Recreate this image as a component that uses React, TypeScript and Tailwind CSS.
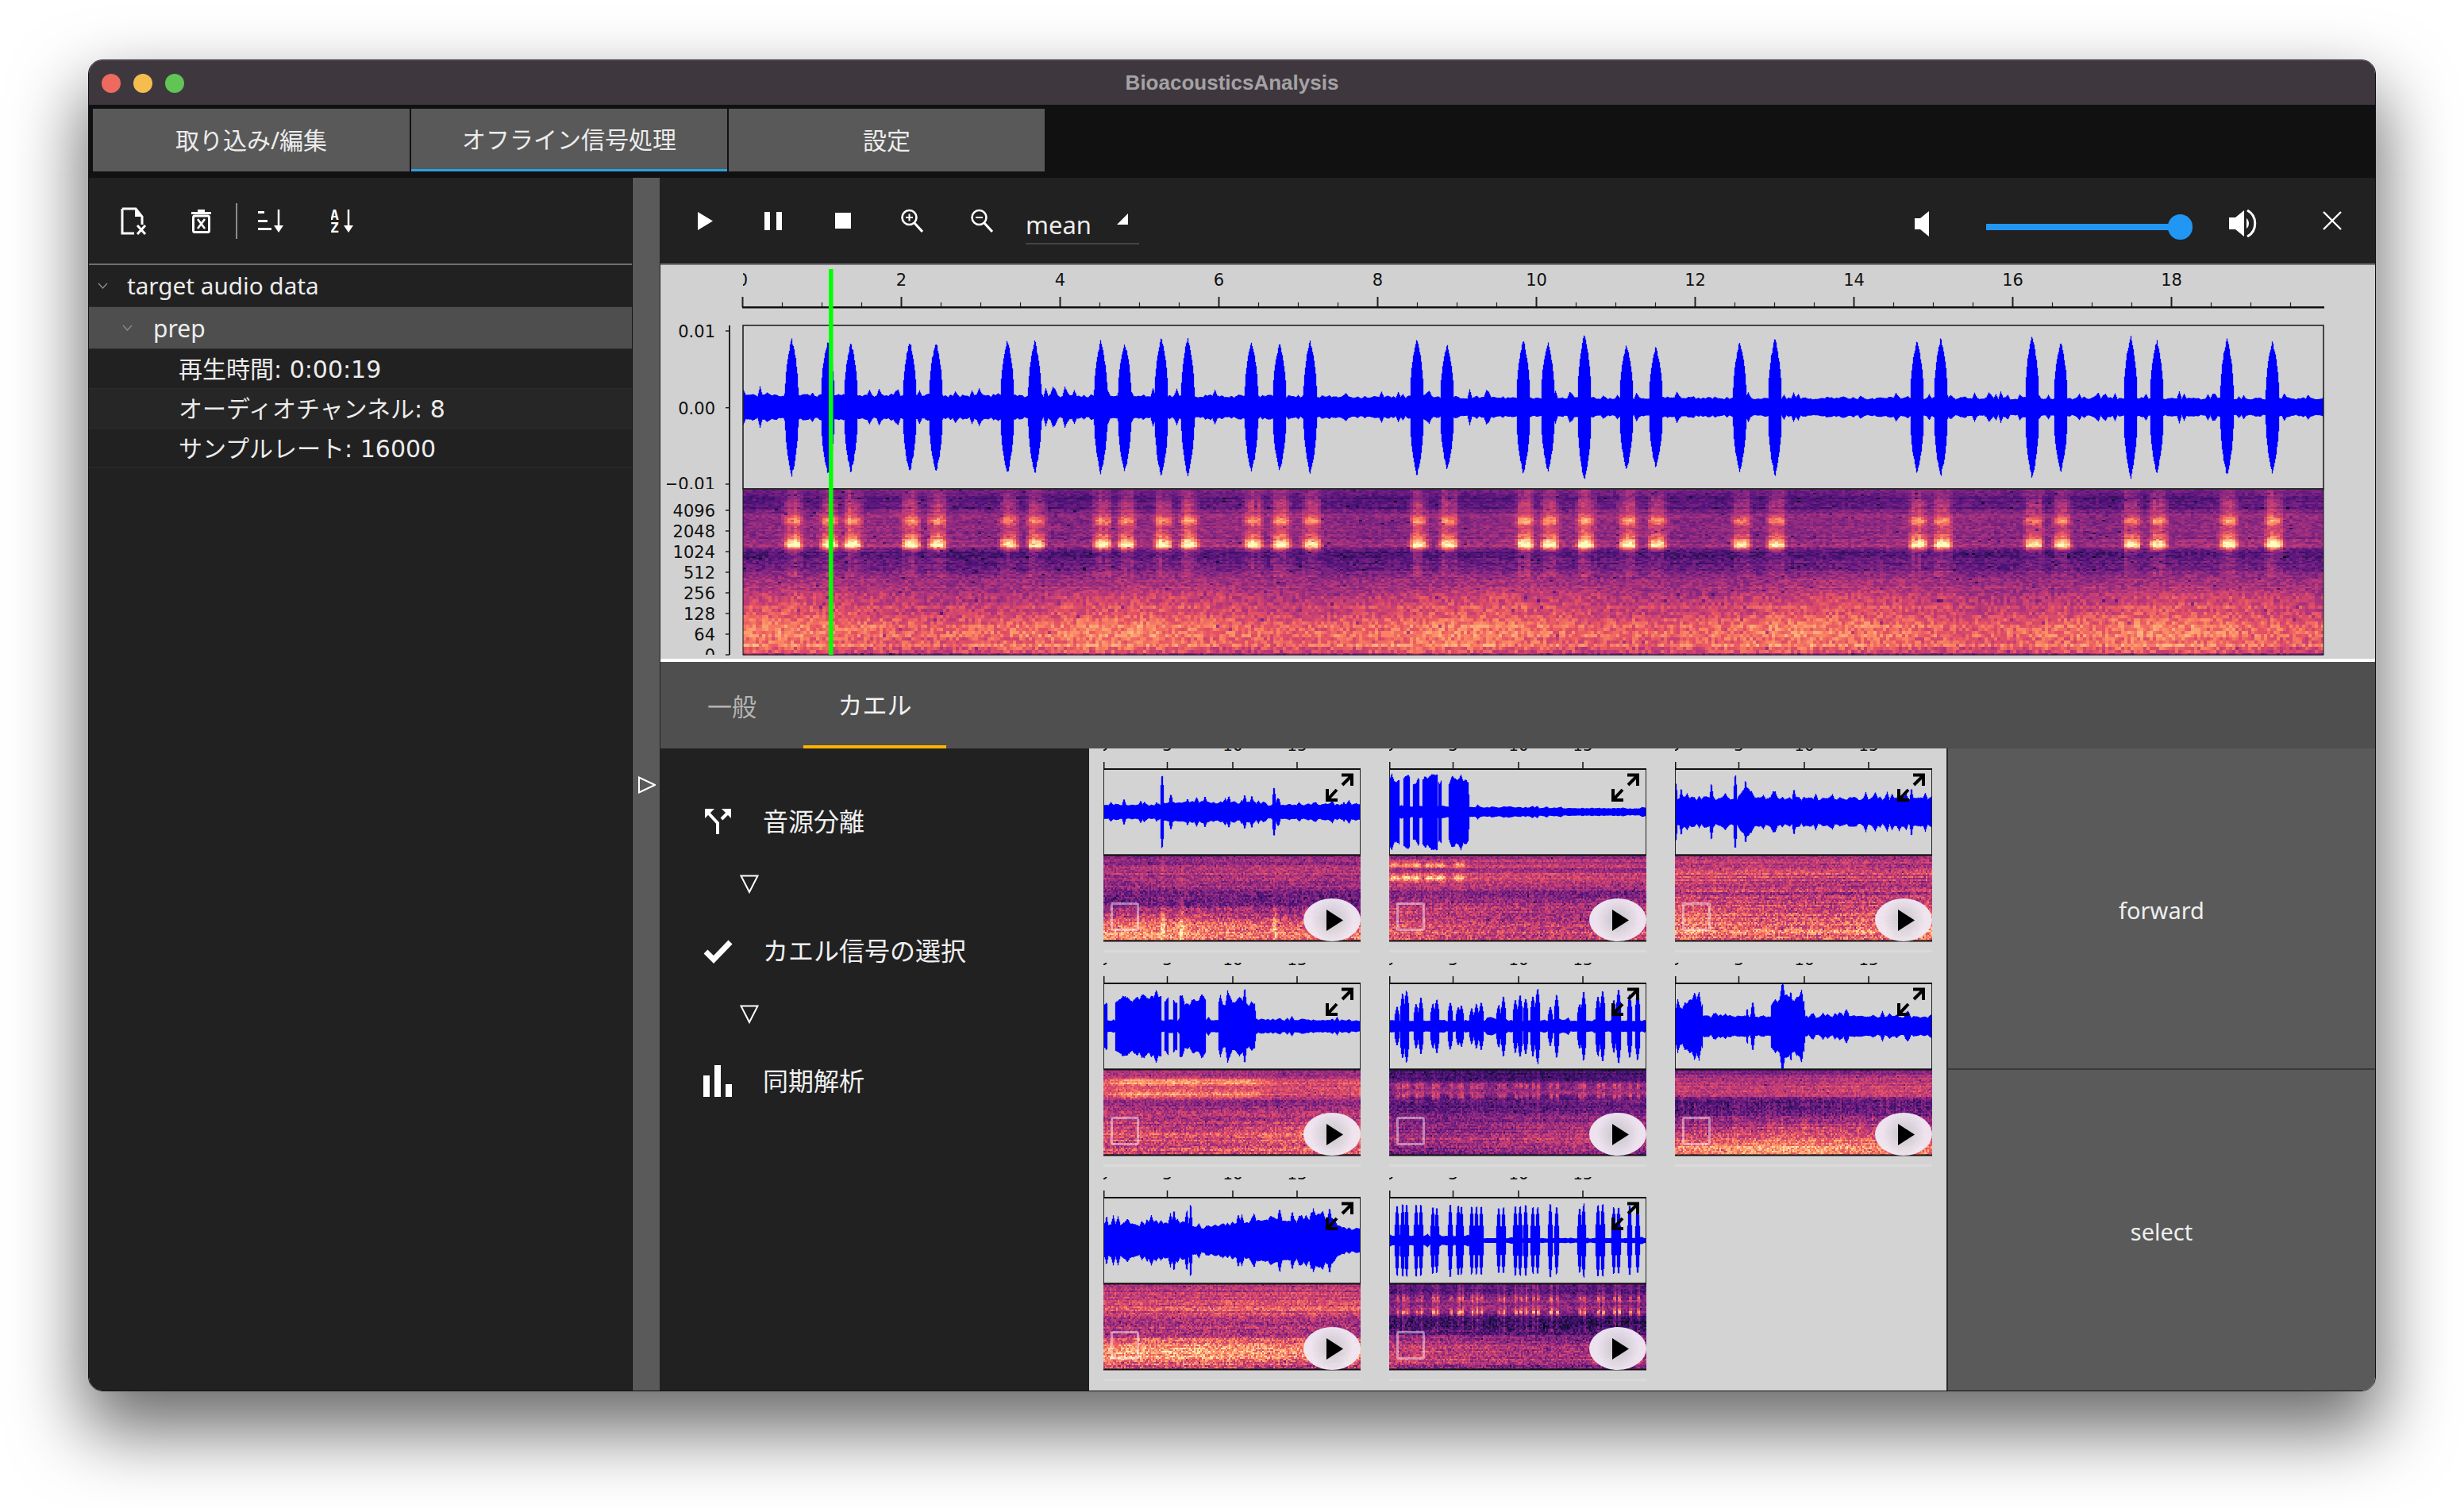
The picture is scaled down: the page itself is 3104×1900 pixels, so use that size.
import React from "react";

const rng = (seed: number) => () => {
  seed |= 0;
  seed = (seed + 0x6d2b79f5) | 0;
  let t = Math.imul(seed ^ (seed >>> 15), 1 | seed);
  t = (t + Math.imul(t ^ (t >>> 7), 61 | t)) ^ t;
  return ((t ^ (t >>> 14)) >>> 0) / 4294967296;
};

const interp = (stops: number[][], v: number) => {
  if (v <= stops[0][0]) return stops[0][1];
  for (let i = 1; i < stops.length; i++) {
    if (v <= stops[i][0]) {
      const [a, b] = stops[i - 1];
      const [c, d] = stops[i];
      return b + ((d - b) * (v - a)) / (c - a || 1);
    }
  }
  return stops[stops.length - 1][1];
};

const MAGMA: [number, number, number, number][] = [
  [0, 0, 0, 4],
  [0.13, 28, 16, 68],
  [0.25, 79, 18, 123],
  [0.38, 129, 37, 129],
  [0.5, 181, 54, 122],
  [0.63, 229, 80, 100],
  [0.75, 251, 135, 97],
  [0.88, 254, 194, 135],
  [1, 252, 253, 191],
];
const LEVELS = 36;
const colors = Array.from({ length: LEVELS }, (_, i) => {
  const v = i / (LEVELS - 1);
  let k = 1;
  while (k < MAGMA.length - 1 && MAGMA[k][0] < v) k++;
  const a = MAGMA[k - 1];
  const b = MAGMA[k];
  const f = (v - a[0]) / (b[0] - a[0]);
  const ch = (n: number) => Math.round(a[n] + (b[n] - a[n]) * f);
  return `rgb(${ch(1)},${ch(2)},${ch(3)})`;
});

type Spec = {
  seed: number;
  w: number;
  h: number;
  cw: number;
  ch: (v: number) => number;
  stops: number[][];
  bursts?: number[];
  bw?: number;
  bands?: number[][];
  streak?: number;
  streakTo?: number;
  grain?: number;
  rowVar?: number;
  streakCols?: number;
};

function buildSpec(c: Spec) {
  const r = rng(c.seed);
  const bins: string[][] = colors.map(() => []);
  const grain = c.grain ?? 0.16;
  const rowVar = c.rowVar ?? 0.05;
  const nCols = Math.ceil(c.w / c.cw);
  const colOff = Array.from({ length: nCols }, () => r() - 0.5);
  let y = 0;
  while (y < c.h) {
    const v = y / c.h;
    const ch = c.ch(v);
    const rowOff = (r() - 0.5) * 2 * rowVar;
    const base = interp(c.stops, v);
    for (let xi = 0; xi < nCols; xi++) {
      const x = xi * c.cw;
      let t = base + rowOff + (r() - 0.5) * grain * (0.7 + v * 0.6);
      if (r() < 0.012) t -= 0.18;
      t += 0.025 * Math.sin(x / 70 + c.seed + v * 3) * (v > 0.6 ? 1.6 : 0.7);
      if (c.streakCols && v > 0.3 && v < 0.75) t += colOff[xi] * c.streakCols;
      if (c.bursts) {
        let g = 0;
        for (const b of c.bursts) {
          const d = (x - b) / (c.bw ?? 12);
          if (Math.abs(d) < 2) g = Math.max(g, Math.exp(-d * d * d * d));
        }
        if (g > 0.01) {
          let add = 0;
          for (const [bv, s, sig] of c.bands ?? []) {
            const q = (v - bv) / sig;
            add += s * Math.exp(-q * q);
          }
          if (v < (c.streakTo ?? 0.52)) add += (c.streak ?? 0.1) * (0.6 + 0.8 * colOff[xi]);
          t += add * g;
        }
      }
      const i = Math.max(0, Math.min(LEVELS - 1, Math.round(t * (LEVELS - 1))));
      bins[i].push(`M${x} ${y}h${c.cw}v${ch}h-${c.cw}z`);
    }
    y += ch;
  }
  return bins
    .map((b, i) => ({ color: colors[i], d: b.join("") }))
    .filter((b) => b.d.length > 0);
}

function wavePath(w: number, cy: number, env: number[][], bursts: number[][], seed: number, bumpMax = 0.5) {
  const r = rng(seed);
  const step = 3;
  const n = Math.ceil(w / step) + 2;
  const sm = Array.from({ length: n }, () => r());
  const bump = Array.from({ length: n }, () => (r() < 0.22 ? r() * bumpMax : 0));
  let d = "";
  for (let x = 0; x < w; x++) {
    const i = Math.floor(x / step);
    const f = x / step - i;
    const s = sm[i] + (sm[i + 1] - sm[i]) * f;
    const bp = bump[i] + (bump[i + 1] - bump[i]) * f;
    const e = interp(env, x);
    let a = e * (0.82 + 0.26 * s) + bp * e;
    for (const [bx, H, bw] of bursts) {
      const u = Math.abs(x + 0.5 - bx) / bw;
      if (u < 1) a = Math.max(a, H * Math.pow(1 - u, 0.4) * (0.96 + 0.04 * r()));
    }
    const up = a * (0.98 + 0.04 * r());
    const dn = a * (0.98 + 0.04 * r());
    d += `M${x + 0.5} ${(cy - up).toFixed(1)}V${(cy + dn).toFixed(1)}`;
  }
  return d;
}

const MAIN_X = [997.4, 1042.9, 1072, 1146, 1179, 1269, 1303.6, 1386.7, 1416.8, 1463, 1496.4, 1576.5, 1612, 1650.5, 1785, 1823, 1919, 1950, 1996, 2049, 2086, 2191.6, 2236, 2415, 2445, 2560, 2596, 2684, 2717, 2805.5, 2862.7].map((x) => x - 936);
const MAIN_H = [88, 85, 83, 84, 84, 86, 85, 85, 83, 90, 89, 84, 82, 85, 88, 80, 85, 83, 94, 80, 78, 84, 88, 85, 88, 92, 84, 91, 85, 88, 84];

const mainWave = wavePath(
  1991,
  103,
  [[0, 16], [650, 14.5], [1000, 12.5], [1991, 11.5]],
  MAIN_X.map((x, i) => [x, MAIN_H[i], 8.5]),
  11,
  0.7
);
const mainSpec = buildSpec({
  seed: 5,
  w: 1991,
  h: 209,
  cw: 4,
  ch: (v) => (v < 0.62 ? 2 : 4),
  stops: [[0, 0.3], [0.05, 0.27], [0.11, 0.27], [0.15, 0.46], [0.2, 0.4], [0.28, 0.39], [0.33, 0.46], [0.37, 0.27], [0.48, 0.33], [0.56, 0.46], [0.64, 0.55], [0.72, 0.62], [0.84, 0.69], [0.93, 0.7], [0.97, 0.56], [1, 0.42]],
  bursts: MAIN_X,
  bw: 11,
  bands: [[0.185, 0.32, 0.026], [0.33, 0.36, 0.026], [0.295, 0.24, 0.05], [0.09, 0.14, 0.05]],
  streak: 0.13,
  grain: 0.17,
  rowVar: 0.04,
});

const B5 = [10, 17, 22, 34, 40, 55, 60, 77, 87, 91, 104, 110, 116, 138, 144, 159, 165, 172, 181, 187, 203, 211, 240, 245, 263, 269, 283, 289, 303, 313];
const H5 = [26, 44, 48, 30, 38, 30, 36, 32, 26, 28, 24, 30, 32, 28, 40, 36, 42, 38, 40, 50, 26, 42, 30, 46, 40, 48, 36, 50, 42, 46];

const noTall = (v: number) => 2 + 0 * v;

const thumbs = [
  {
    seed: 21,
    env: [[0, 9.5], [78, 9.5], [84, 13], [190, 13], [196, 9.5], [324, 10.5]],
    bursts: [[74, 50, 2.5], [26, 17, 3], [47, 15, 3], [67, 13, 3], [85, 24, 3], [106, 18, 3], [128, 21, 3], [158, 21, 3], [178, 23, 3], [187, 21, 3], [215, 33, 2.5], [220, 19, 4], [303, 13, 3]],
    stops: [[0, 0.38], [0.1, 0.44], [0.15, 0.54], [0.28, 0.44], [0.38, 0.42], [0.45, 0.31], [0.55, 0.35], [0.62, 0.44], [0.72, 0.56], [0.86, 0.68], [0.95, 0.74], [1, 0.52]],
    spec: { bursts: [74, 98, 215], bw: 3, bands: [[0.8, 0.2, 0.25]], streak: 0.05, grain: 0.28, rowVar: 0.06, streakCols: 0.04 },
  },
  {
    seed: 22,
    env: [[0, 43], [12, 44], [13, 8], [17, 8], [18, 46], [25, 46], [26, 8], [29, 8], [30, 41], [37, 41], [38, 8], [41, 8], [42, 47], [60, 47], [61, 8], [62, 42], [65, 42], [66, 8], [74, 8], [75, 42], [80, 47], [99, 45], [101, 7], [180, 5.5], [324, 4.5]],
    bursts: [],
    stops: [[0, 0.42], [0.08, 0.52], [0.15, 0.47], [0.25, 0.6], [0.32, 0.52], [0.4, 0.4], [0.55, 0.44], [0.72, 0.52], [0.88, 0.62], [1, 0.54]],
    spec: { bursts: [6, 21, 33, 50, 63, 87], bw: 7, bands: [[0.1, 0.3, 0.03], [0.25, 0.33, 0.035]], streak: 0.03, grain: 0.26, rowVar: 0.06, streakCols: 0.05 },
  },
  {
    seed: 23,
    env: [[0, 18], [324, 18]],
    bursts: [[1.5, 36, 2], [8, 32, 2.5], [46, 38, 2.5], [76, 50, 2.5], [89, 43, 2.5], [90, 32, 14], [150, 30, 3], [298, 32, 2.5]],
    stops: [[0, 0.48], [0.1, 0.54], [0.2, 0.58], [0.35, 0.52], [0.5, 0.5], [0.6, 0.58], [0.72, 0.67], [0.85, 0.76], [1, 0.64]],
    spec: { grain: 0.3, rowVar: 0.08 },
  },
  {
    seed: 24,
    env: [[0, 28], [4, 28], [5, 8], [14, 8], [15, 36], [72, 38], [73, 8], [76, 8], [77, 36], [81, 36], [82, 8], [87, 8], [88, 34], [92, 34], [93, 8], [95, 8], [96, 28], [125, 36], [128, 33], [129, 8], [144, 8], [145, 28], [175, 32], [190, 28], [192, 9], [324, 7.5]],
    bursts: [[178, 50, 3], [115, 34, 4]],
    stops: [[0, 0.42], [0.08, 0.48], [0.12, 0.62], [0.28, 0.62], [0.33, 0.42], [0.5, 0.5], [0.68, 0.56], [0.72, 0.66], [0.8, 0.62], [0.95, 0.6], [1, 0.48]],
    spec: { bursts: [50, 100, 165], bw: 40, bands: [[0.13, 0.2, 0.04], [0.28, 0.18, 0.04]], streak: 0.02, grain: 0.26, rowVar: 0.06 },
  },
  {
    seed: 25,
    env: [[0, 7.5], [324, 7.5]],
    bursts: B5.map((x, i) => [x, H5[i], 3.5]),
    stops: [[0, 0.22], [0.08, 0.22], [0.15, 0.38], [0.25, 0.42], [0.35, 0.3], [0.45, 0.27], [0.55, 0.38], [0.7, 0.42], [0.8, 0.5], [0.92, 0.42], [1, 0.3]],
    spec: { bursts: B5, bw: 2.5, bands: [[0.18, 0.2, 0.03], [0.3, 0.25, 0.03]], streak: 0.05, grain: 0.22, rowVar: 0.05 },
  },
  {
    seed: 26,
    env: [[0, 20], [10, 28], [25, 34], [34, 30], [35, 13], [120, 13], [121, 28], [134, 40], [160, 34], [162, 13], [324, 12]],
    bursts: [[98, 32, 3], [91, 24, 2], [134, 50, 3], [146, 46, 3], [216, 22, 5], [293, 20, 6], [162, 36, 2]],
    stops: [[0, 0.32], [0.1, 0.5], [0.2, 0.56], [0.3, 0.54], [0.33, 0.3], [0.5, 0.33], [0.6, 0.46], [0.8, 0.62], [0.9, 0.78], [1, 0.68]],
    spec: { grain: 0.24, rowVar: 0.05, streakCols: 0.09 },
  },
  {
    seed: 27,
    env: [[0, 24], [50, 22], [88, 26], [120, 17], [170, 24], [210, 31], [235, 26], [280, 33], [300, 18], [324, 14]],
    bursts: [[89, 40, 3], [105, 40, 3], [110, 50, 2], [55, 28, 4], [4, 32, 3], [18, 30, 3], [170, 34, 4], [190, 36, 4], [222, 42, 4], [238, 38, 4], [262, 38, 4], [285, 42, 4]],
    stops: [[0, 0.44], [0.1, 0.54], [0.2, 0.62], [0.35, 0.58], [0.4, 0.44], [0.55, 0.5], [0.7, 0.7], [0.85, 0.78], [0.93, 0.58], [1, 0.46]],
    spec: { grain: 0.3, rowVar: 0.08 },
  },
  {
    seed: 28,
    env: [[0, 6], [100, 6], [102, 3], [324, 3]],
    bursts: B5.map((x) => [x, 45 + (x % 6), 2.8]),
    stops: [[0, 0.26], [0.1, 0.27], [0.18, 0.4], [0.3, 0.42], [0.4, 0.2], [0.55, 0.24], [0.62, 0.4], [0.8, 0.52], [0.9, 0.5], [1, 0.32]],
    spec: { bursts: B5, bw: 2, bands: [[0.16, 0.25, 0.025], [0.32, 0.38, 0.03]], streak: 0.16, streakTo: 0.55, grain: 0.24, rowVar: 0.05 },
  },
].map((t) => ({
  wave: wavePath(324, 54, t.env, t.bursts, t.seed),
  spec: buildSpec({ seed: t.seed + 40, w: 324, h: 108, cw: 2, ch: noTall, stops: t.stops, ...t.spec }),
}));

function SpecPaths({ data }: { data: { color: string; d: string }[] }) {
  return (
    <g shapeRendering="crispEdges">
      {data.map((p) => (
        <path key={p.color} d={p.d} fill={p.color} />
      ))}
    </g>
  );
}

const PLOT_FONT = "'DejaVu Sans', sans-serif";

function MainPlot() {
  const xs = Array.from({ length: 40 }, (_, i) => i / 2);
  const ylabels = [
    ["4096", 643],
    ["2048", 669],
    ["1024", 695],
    ["512", 721],
    ["256", 747],
    ["128", 773],
    ["64", 799],
    ["0", 825],
  ] as [string, number][];
  return (
    <svg className="block h-[496px] w-[2160px]" viewBox="832 334 2160 496" fontFamily={PLOT_FONT} fontSize="21" fill="#111">
      <defs>
        <clipPath id="xclip"><rect x="936" y="340" width="2000" height="40" /></clipPath>
        <clipPath id="yclip"><rect x="840" y="400" width="80" height="216" /></clipPath>
        <clipPath id="y2clip"><rect x="840" y="617" width="80" height="208" /></clipPath>
      </defs>
      <g clipPath="url(#xclip)">
        {[0, 2, 4, 6, 8, 10, 12, 14, 16, 18].map((t) => (
          <text key={t} x={935.5 + t * 100} y="360" textAnchor="middle">{t}</text>
        ))}
      </g>
      {xs.map((t) => (
        <line key={t} x1={935.5 + t * 100} x2={935.5 + t * 100} y1={t % 2 === 0 ? 374 : 381} y2="387" stroke="#222" strokeWidth={t % 2 === 0 ? 2 : 1.2} />
      ))}
      <rect x="935" y="386" width="1993" height="2.5" fill="#111" />
      <line x1="919" x2="919" y1="410" y2="825" stroke="#222" strokeWidth="2" />
      <g clipPath="url(#yclip)">
        {[["0.01", 425], ["0.00", 521.7], ["−0.01", 617]].map(([l, y]) => (
          <text key={l as string} x="901" y={y as number} textAnchor="end">{l}</text>
        ))}
      </g>
      {[417, 513.7, 610].map((y) => (
        <line key={y} x1="914" x2="919" y1={y} y2={y} stroke="#222" strokeWidth="1.5" />
      ))}
      <g clipPath="url(#y2clip)">
        {ylabels.map(([l, y]) => (
          <text key={l} x="901" y={y + 8} textAnchor="end">{l}</text>
        ))}
      </g>
      {ylabels.map(([l, y]) => (
        <line key={l} x1="914" x2="919" y1={y} y2={y} stroke="#222" strokeWidth="1.5" />
      ))}
      <svg x="936" y="410" width="1991" height="206" viewBox="0 0 1991 206">
        <path d={mainWave} stroke="#0000ff" strokeWidth="1.3" fill="none" />
      </svg>
      <rect x="936" y="410" width="1991" height="206" fill="none" stroke="#222" strokeWidth="1.6" />
      <svg x="936" y="616.5" width="1991" height="209" viewBox="0 0 1991 209">
        <SpecPaths data={mainSpec} />
      </svg>
      <rect x="936" y="616" width="1991" height="209" fill="none" stroke="#111" strokeWidth="1" />
      <rect x="1044" y="339" width="5.5" height="486" fill="#00ff00" />
    </svg>
  );
}

function Thumb({ t }: { t: (typeof thumbs)[number] }) {
  return (
    <div className="relative h-[270px] w-[324px] overflow-hidden">
      <svg className="block h-[270px] w-[324px]" viewBox="0 0 324 270" fontFamily={PLOT_FONT} fontSize="20" fill="#111">
        <text x="0" y="3" textAnchor="middle">0</text>
        <text x="80.5" y="3" textAnchor="middle">5</text>
        <text x="163" y="3" textAnchor="middle">10</text>
        <text x="244" y="3" textAnchor="middle">15</text>
        {[0.75, 80.5, 163, 244].map((x) => (
          <line key={x} x1={x} x2={x} y1="17" y2="26" stroke="#111" strokeWidth="1.5" />
        ))}
        <svg x="0" y="26" width="324" height="108" viewBox="0 0 324 108">
          <path d={t.wave} stroke="#0000ff" strokeWidth="1.3" fill="none" />
        </svg>
        <rect x="0.5" y="26" width="323" height="108" fill="none" stroke="#222" strokeWidth="1" />
        <rect x="0" y="25" width="324" height="2" fill="#111" />
        <svg x="0" y="135" width="324" height="108" viewBox="0 0 324 108">
          <SpecPaths data={t.spec} />
        </svg>
        <rect x="0" y="133.5" width="324" height="2" fill="#111" />
        <rect x="0" y="241.5" width="324" height="2" fill="#111" />
        <rect x="0" y="254" width="324" height="3" fill="#dadada" />
      </svg>
      <svg className="absolute left-[280px] top-[31px] h-[36px] w-[35px]" viewBox="0 0 35 36" fill="none" stroke="#000" strokeWidth="4">
        <path d="M20 2.5H33V16M33 3L21 15" />
        <path d="M2 20V34H15M2 34L14 21" />
      </svg>
      <div className="absolute left-[9px] top-[194px] h-[36px] w-[36px] rounded-[3px] border-[3px] border-[rgba(255,255,255,0.45)]" />
      <div className="absolute left-[252px] top-[189px] flex h-[54px] w-[72px] items-center justify-center rounded-[50%] bg-[radial-gradient(circle,rgba(205,205,210,0.96)_10%,rgba(240,233,243,0.96)_60%)]">
        <svg className="ml-[7px] h-[27px] w-[21px]" viewBox="0 0 21 27">
          <path d="M0 0L21 13.5L0 27Z" fill="#000" />
        </svg>
      </div>
    </div>
  );
}

function Wh({ w, h, children, className = "" }: { w: number; h: number; children: React.ReactNode; className?: string }) {
  return (
    <svg width={w} height={h} viewBox={`0 0 ${w} ${h}`} className={`block shrink-0 ${className}`}>
      {children}
    </svg>
  );
}

const treeRow = "flex items-center border-b border-[#2c2c2c] text-[30px] text-[#ececec]";
const jpRow = "pt-[2px] font-['DejaVu_Sans','Noto_Sans_CJK_JP',sans-serif]";

function Chevron({ className = "" }: { className?: string }) {
  return (
    <Wh w={13} h={8} className={className}>
      <path d="M1 1L6.5 7L12 1" fill="none" stroke="#8a8a8a" strokeWidth="1.4" />
    </Wh>
  );
}

function Down({ className = "" }: { className?: string }) {
  return (
    <Wh w={24} h={24} className={className}>
      <path d="M1.5 1.5H22.5L12 22Z" fill="none" stroke="#fff" strokeWidth="2" />
    </Wh>
  );
}

export default function App() {
  return (
    <div className="h-[1900px] w-[3104px] overflow-hidden bg-white pl-[111px] pt-[75px] font-['Noto_Sans','Noto_Sans_CJK_JP',sans-serif]">
      <div className="flex h-[1678px] w-[2882px] flex-col overflow-hidden rounded-[18px] border border-[#111] shadow-[0_44px_90px_6px_rgba(0,0,0,0.58)]">
        <div className="relative flex h-[56px] shrink-0 items-center justify-center border-t border-[#5e585e] bg-[#3e383e]">
          <div className="absolute left-[16px] top-[16px] flex gap-[16px]">
            <div className="h-[24px] w-[24px] rounded-full bg-[#ee6a5f]" />
            <div className="h-[24px] w-[24px] rounded-full bg-[#f5bd4f]" />
            <div className="h-[24px] w-[24px] rounded-full bg-[#61c454]" />
          </div>
          <span className="font-['Liberation_Sans',sans-serif] text-[26px] font-bold text-[#a5a2a5]">BioacousticsAnalysis</span>
        </div>

        <div className="flex h-[92px] shrink-0 gap-[2px] bg-[#111111] pl-[5px] pt-[5px] text-[30px] text-[#ececec]">
          <div className="flex h-[79px] w-[399px] items-center justify-center bg-[#595959]">取り込み/編集</div>
          <div className="flex h-[79px] w-[398px] items-center justify-center border-b-[3px] border-[#29a3dc] bg-[#595959]">オフライン信号処理</div>
          <div className="flex h-[79px] w-[398px] items-center justify-center bg-[#595959]">設定</div>
        </div>

        <div className="flex min-h-0 flex-1">
          <div className="flex w-[685px] shrink-0 flex-col border-r border-[#111] bg-[#212121]">
            <div className="flex h-[110px] shrink-0 items-center border-b-2 border-[#707070] pl-[40px]">
              <Wh w={33} h={35}>
                <path d="M2 2H19L27 12V22M2 2V33H17" fill="none" stroke="#fff" strokeWidth="3" />
                <path d="M18 2L27 12H18Z" fill="#fff" />
                <path d="M21 23L31 34M31 23L21 34" stroke="#fff" strokeWidth="3" />
              </Wh>
              <Wh w={25} h={31} className="ml-[56px]">
                <path d="M8 1H17V4H8ZM0 4H25V7H0Z" fill="#fff" />
                <rect x="2.5" y="9" width="20" height="20.5" rx="2" fill="none" stroke="#fff" strokeWidth="3" />
                <path d="M8 13L17 25M17 13L8 25" stroke="#fff" strokeWidth="2.6" />
              </Wh>
              <div className="ml-[31px] h-[45px] w-[2px] bg-[#8c8c8c]" />
              <Wh w={34} h={31} className="ml-[26px]">
                <path d="M0 3H8V6H0ZM0 14H12V17H0ZM0 24H17V27H0Z" fill="#fff" />
                <path d="M26 1V24" stroke="#fff" strokeWidth="2.5" />
                <path d="M20 21H32L26 30Z" fill="#fff" />
              </Wh>
              <Wh w={30} h={31} className="ml-[58px]">
                <text x="-1" y="13.5" fontSize="18" fontWeight="700" fill="#fff" fontFamily="'DejaVu Sans Mono', monospace">A</text>
                <text x="-1" y="30" fontSize="18" fontWeight="700" fill="#fff" fontFamily="'DejaVu Sans Mono', monospace">Z</text>
                <path d="M22 1V24" stroke="#fff" strokeWidth="2.5" />
                <path d="M16 21H28L22 30Z" fill="#fff" />
              </Wh>
            </div>
            <div className={`${treeRow} h-[53px] pl-[11px]`}>
              <Chevron />
              <span className="ml-[24px] text-[29.7px]">target audio data</span>
            </div>
            <div className={`${treeRow} h-[53px] bg-[#4e4e4e] pl-[42px]`}>
              <Chevron />
              <span className="ml-[26px]">prep</span>
            </div>
            <div className={`${treeRow} ${jpRow} h-[50px] pl-[113px]`}>再生時間: 0:00:19</div>
            <div className={`${treeRow} ${jpRow} h-[50px] bg-[#262626] pl-[113px]`}>オーディオチャンネル: 8</div>
            <div className={`${treeRow} ${jpRow} h-[50px] pl-[113px]`}>サンプルレート: 16000</div>
          </div>

          <div className="flex w-[34px] shrink-0 flex-col bg-[#5a5a5a] pl-[7px] pt-[754px]">
            <Wh w={22} h={22}>
              <path d="M1 1.5V20.5L21 11Z" fill="none" stroke="#fff" strokeWidth="2" />
            </Wh>
          </div>

          <div className="flex min-w-0 flex-1 flex-col border-l border-[#222]">
            <div className="flex h-[110px] shrink-0 items-center border-b-2 border-[#777] bg-[#212121] pl-[47px] pr-[42px] text-[#ececec]">
              <Wh w={19} h={23}><path d="M0 0L19 11.5L0 23Z" fill="#fff" /></Wh>
              <Wh w={22} h={23} className="ml-[65px]"><path d="M0 0H7V23H0ZM15 0H22V23H15Z" fill="#fff" /></Wh>
              <Wh w={20} h={20} className="ml-[67px]"><rect width="20" height="20" fill="#fff" /></Wh>
              <Wh w={28} h={30} className="ml-[63px]">
                <circle cx="10.5" cy="11" r="9" fill="none" stroke="#fff" strokeWidth="2.6" />
                <path d="M10.5 6.5V15.5M6 11H15" stroke="#fff" strokeWidth="2" />
                <path d="M17 18L27 29" stroke="#fff" strokeWidth="3" />
              </Wh>
              <Wh w={28} h={30} className="ml-[60px]">
                <circle cx="10.5" cy="11" r="9" fill="none" stroke="#fff" strokeWidth="2.6" />
                <path d="M6 11H15" stroke="#fff" strokeWidth="2" />
                <path d="M17 18L27 29" stroke="#fff" strokeWidth="3" />
              </Wh>
              <div className="relative ml-[41px] mt-[14px] h-[46px] w-[143px] border-b-2 border-[#444] text-[31px] leading-[43px]">
                mean
                <svg className="absolute right-[14px] top-[7px] h-[14px] w-[14px]" viewBox="0 0 14 14">
                  <path d="M14 0V14H0Z" fill="#fff" />
                </svg>
              </div>
              <Wh w={18} h={32} className="ml-auto mt-[8px]">
                <path d="M0 9H7L18 0V32L7 23H0Z" fill="#fff" />
              </Wh>
              <div className="relative ml-[72px] mt-[16px] h-[8px] w-[260px]">
                <div className="h-[8px] w-[230px] bg-[#2196f3]" />
                <div className="absolute left-[229px] top-[-12px] h-[32px] w-[31px] rounded-full bg-[#2196f3]" />
              </div>
              <Wh w={37} h={35} className="ml-[46px] mt-[6px]">
                <path d="M0 10H8L19 1V34L8 25H0Z" fill="#fff" />
                <path d="M22 11C26 14 26 21 22 24Z" fill="#fff" />
                <path d="M23 1C36 8 36 27 23 34" fill="none" stroke="#fff" strokeWidth="3" />
              </Wh>
              <Wh w={24} h={24} className="ml-[81px] mt-[-1px]">
                <path d="M1 1L23 23M23 1L1 23" stroke="#fff" strokeWidth="2.4" />
              </Wh>
            </div>

            <div className="h-[496px] shrink-0 bg-[#d1d1d1]">
              <MainPlot />
            </div>
            <div className="h-[4px] shrink-0 bg-white" />

            <div className="flex h-[109px] shrink-0 bg-[#4f4f4f] text-[31px]">
              <div className="flex w-[180px] items-center justify-center pt-[3px] text-[#b4b4b4]">一般</div>
              <div className="flex w-[180px] items-center justify-center border-b-4 border-[#ffb300] pt-[3px] text-[#f2f2f2]">カエル</div>
            </div>

            <div className="flex min-h-0 flex-1">
              <div className="flex w-[540px] shrink-0 flex-col bg-[#212121] pl-[54px] pt-[51px] text-[32px] text-[#f0f0f0]">
                <div className="flex h-[81px] items-center">
                  <Wh w={37} h={33}>
                    <path d="M18 33V19L6 6" fill="none" stroke="#fff" strokeWidth="4" />
                    <path d="M2 1H14L2 13Z" fill="#fff" />
                    <path d="M23 14L31 6" fill="none" stroke="#fff" strokeWidth="4" />
                    <path d="M35 1H23L35 13Z" fill="#fff" />
                  </Wh>
                  <span className="ml-[38px]">音源分離</span>
                </div>
                <div className="flex h-[82px] items-center pl-[46px]"><Down className="-mt-[4px]" /></div>
                <div className="flex h-[82px] items-center">
                  <Wh w={37} h={32}>
                    <path d="M3 17L13 27L34 5" fill="none" stroke="#fff" strokeWidth="7" />
                  </Wh>
                  <span className="ml-[38px]">カエル信号の選択</span>
                </div>
                <div className="flex h-[82px] items-center pl-[46px]"><Down className="-mt-[4px]" /></div>
                <div className="flex h-[82px] items-center">
                  <Wh w={37} h={40}>
                    <path d="M0 13H8V40H0ZM14 0H22V40H14ZM28 24H36V40H28Z" fill="#fff" />
                  </Wh>
                  <span className="ml-[38px]">同期解析</span>
                </div>
              </div>

              <div className="min-w-0 flex-1 overflow-hidden bg-[#d3d3d3] pl-[18px]">
                <div className="grid grid-cols-[324px_324px_324px] auto-rows-[270px] gap-x-[36px]">
                  {thumbs.map((t, i) => (
                    <Thumb key={i} t={t} />
                  ))}
                </div>
              </div>

              <div className="flex w-[540px] shrink-0 flex-col border-l-2 border-[#2a2a2a] bg-[#5a5a5a] text-[29px] text-[#eeeeee]">
                <div className="flex h-[405px] items-center justify-center border-b-2 border-[#3a3a3a] pt-[4px]">forward</div>
                <div className="flex flex-1 items-center justify-center pt-[3px]">select</div>
              </div>
            </div>
          </div>
        </div>
      </div>
    </div>
  );
}
